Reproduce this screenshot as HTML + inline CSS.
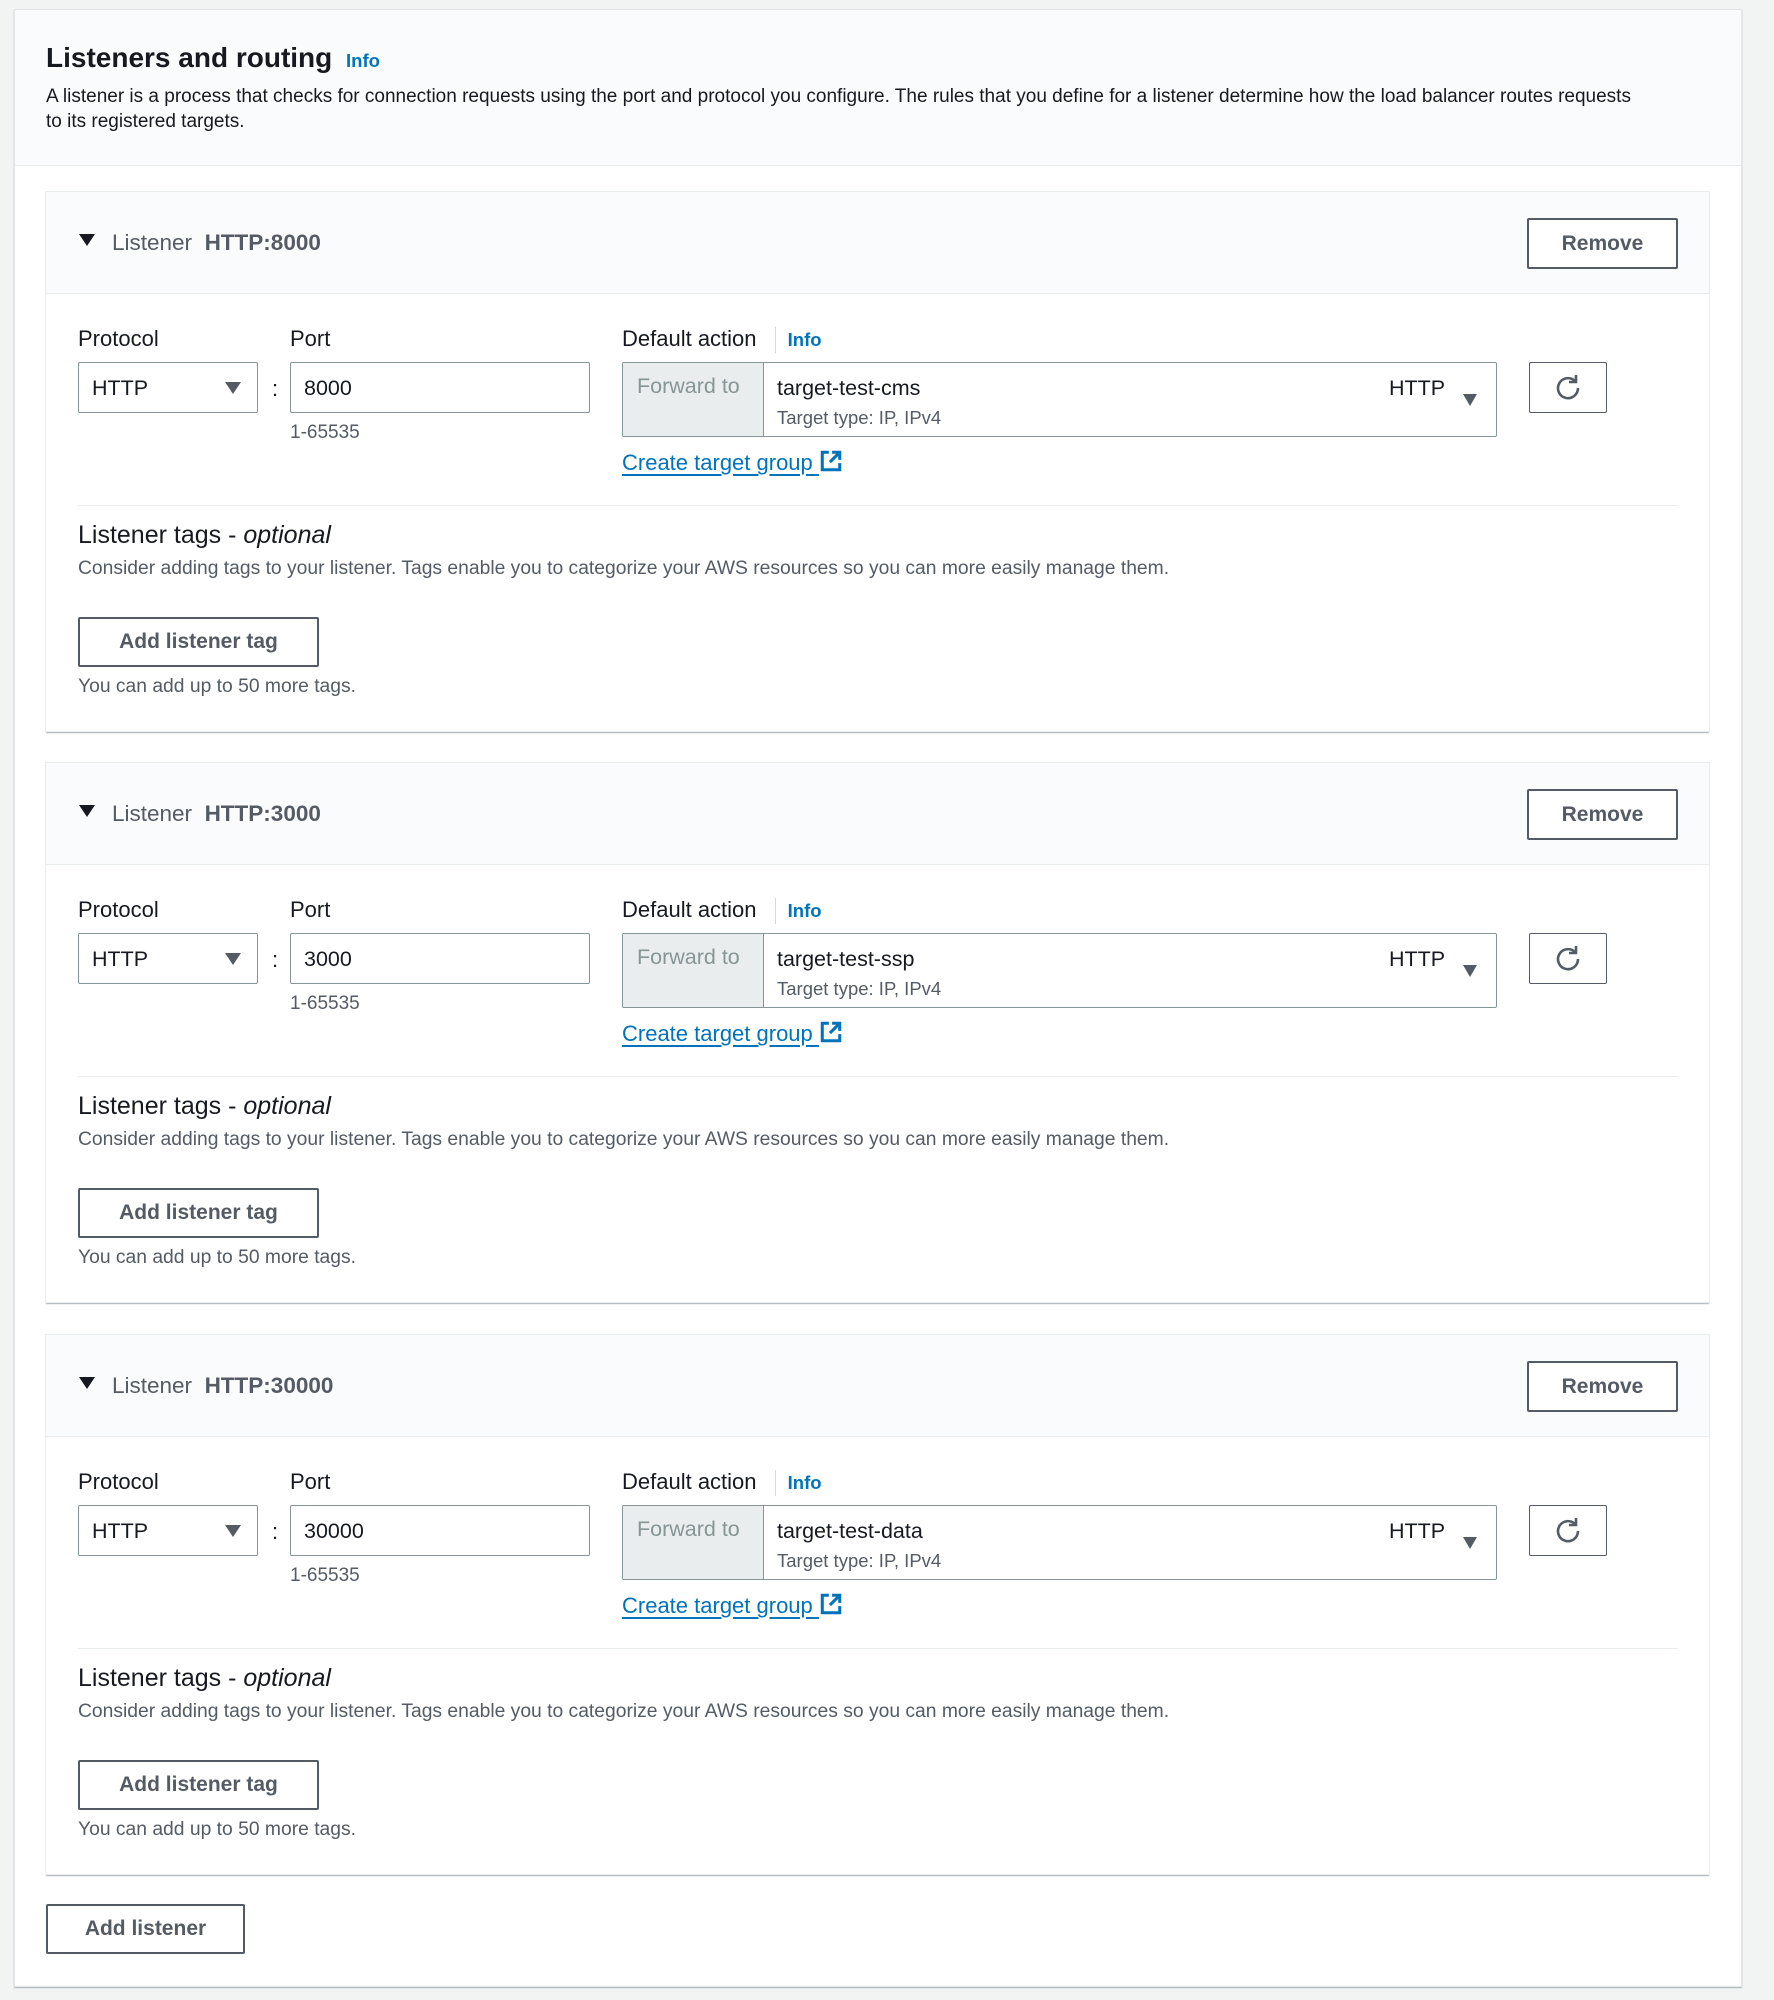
<!DOCTYPE html>
<html><head><meta charset="utf-8"><style>
*{box-sizing:border-box;margin:0;padding:0}
body{width:1774px;height:2000px;background:#f2f3f3;font-family:"Liberation Sans",sans-serif;color:#16191f;position:relative;overflow:hidden}
.abs{position:absolute}
.outer{position:absolute;left:14px;top:9px;width:1728px;height:1978px;background:#fff;border:1px solid #e3e5e8;box-shadow:0 1px 1px rgba(0,28,36,.3)}
.outhead{position:absolute;left:0;top:0;width:100%;height:156px;background:#fafbfc;border-bottom:1px solid #eaeded}
.card{position:absolute;left:31px;width:1665px;height:541px;background:#fff;border:1px solid #eaeded;box-shadow:0 2px 1px -1px rgba(0,28,36,.35)}
.chead{position:absolute;left:0;top:0;width:100%;height:102px;background:#fafbfc;border-bottom:1px solid #eaeded}
.btn{position:absolute;border:2px solid #545b64;border-radius:2px;background:#fff;font-weight:bold;font-size:21px;color:#545b64;display:flex;align-items:center;justify-content:center}
.lbl{position:absolute;font-size:22px;line-height:26px;color:#16191f}
.info{color:#0073bb;font-weight:bold;font-size:18.5px}
.box{position:absolute;border:1px solid #aab7b8;border-radius:2px;background:#fff;font-size:21.5px}
.grey{color:#545b64}
.link{position:absolute;color:#0073bb;font-size:22px;text-decoration:underline;text-underline-offset:4px}
</style></head><body>
<div class="outer">
 <div class="outhead">
  <div class="abs" style="left:31px;top:32px;font-size:28px;font-weight:bold">Listeners and routing <span class="info" style="margin-left:6px">Info</span></div>
  <div class="abs" style="left:31px;top:74px;font-size:19px;line-height:25px;width:1690px;color:#16191f">A listener is a process that checks for connection requests using the port and protocol you configure. The rules that you define for a listener determine how the load balancer routes requests<br>to its registered targets.</div>
 </div>
</div>
<div id="cards"></div>
<div class="btn" style="left:46px;top:1904px;width:199px;height:50px">Add listener</div>
<script>
var data=[["HTTP:8000","8000","target-test-cms",191],["HTTP:3000","3000","target-test-ssp",762],["HTTP:30000","30000","target-test-data",1334]];
var h="";
data.forEach(function(d){
h+='<div class="card" style="left:45px;top:'+d[3]+'px"><div class="chead">'+
'<svg class="abs" style="left:32px;top:41px" width="18" height="14"><path d="M1 1H17L9 13Z" fill="#16191f"/></svg>'+
'<div class="lbl" style="left:66px;top:38px;font-size:22.5px;color:#545b64">Listener&nbsp;&nbsp;<b style="color:#545b64">'+d[0]+'</b></div>'+
'<div class="btn" style="left:1481px;top:26px;width:151px;height:51px">Remove</div></div>'+
'<div class="lbl" style="left:32px;top:134px">Protocol</div>'+
'<div class="lbl" style="left:244px;top:134px">Port</div>'+
'<div class="lbl" style="left:576px;top:134px">Default action <span style="display:inline-block;width:1px;height:26px;background:#d5dbdb;vertical-align:middle;margin:0 12px"></span><span class="info">Info</span></div>'+
'<div class="box" style="left:32px;top:170px;width:180px;height:51px;border-color:#879596"><span class="abs" style="left:13px;top:13px">HTTP</span><svg class="abs" style="left:145px;top:18px" width="18" height="14"><path d="M1 1H17L9 13Z" fill="#545b64"/></svg></div>'+
'<div class="lbl" style="left:226px;top:184px">:</div>'+
'<div class="box" style="left:244px;top:170px;width:300px;height:51px;border-color:#879596"><span class="abs" style="left:13px;top:13px">'+d[1]+'</span></div>'+
'<div class="lbl grey" style="left:244px;top:228px;font-size:19px">1-65535</div>'+
'<div class="box" style="left:576px;top:170px;width:875px;height:75px;border-color:#879596;overflow:hidden">'+
 '<div class="abs" style="left:0;top:0;width:141px;height:100%;background:#eaeded;border-right:1px solid #879596"></div>'+
 '<span class="abs" style="left:14px;top:11px;color:#879596">Forward to</span>'+
 '<span class="abs" style="left:154px;top:13px">'+d[2]+'</span>'+
 '<span class="abs grey" style="left:154px;top:44px;font-size:18.5px">Target type: IP, IPv4</span>'+
 '<span class="abs" style="left:766px;top:13px">HTTP</span>'+
 '<svg class="abs" style="left:839px;top:30px" width="16" height="14"><path d="M1 1H15L8 13Z" fill="#545b64"/></svg></div>'+
'<div class="box" style="left:1483px;top:170px;width:78px;height:51px;border-color:#545b64"><svg class="abs" style="left:24px;top:10px" width="30" height="30" viewBox="0 0 30 30"><path d="M21 8A10 10 0 1 0 24 15" fill="none" stroke="#545b64" stroke-width="2.6"/><path d="M22 2V9H15" fill="none" stroke="#545b64" stroke-width="2.6"/></svg></div>'+
'<div class="link" style="left:576px;top:257px">Create target group <svg style="vertical-align:-3px" width="24" height="24" viewBox="0 0 22 22"><path d="M9 3H3V19H19V13M12 3H19V10M19 3L10 12" fill="none" stroke="#0073bb" stroke-width="2.8"/></svg></div>'+
'<div class="abs" style="left:32px;top:313px;width:1600px;height:1px;background:#eaeded"></div>'+
'<div class="lbl" style="left:32px;top:328px;font-size:25px;line-height:30px">Listener tags - <i>optional</i></div>'+
'<div class="lbl grey" style="left:32px;top:364px;font-size:19.3px">Consider adding tags to your listener. Tags enable you to categorize your AWS resources so you can more easily manage them.</div>'+
'<div class="btn" style="left:32px;top:425px;width:241px;height:50px">Add listener tag</div>'+
'<div class="lbl grey" style="left:32px;top:482px;font-size:19.3px">You can add up to 50 more tags.</div>'+
'</div>';
});
document.getElementById("cards").innerHTML=h;
</script>
</body></html>
